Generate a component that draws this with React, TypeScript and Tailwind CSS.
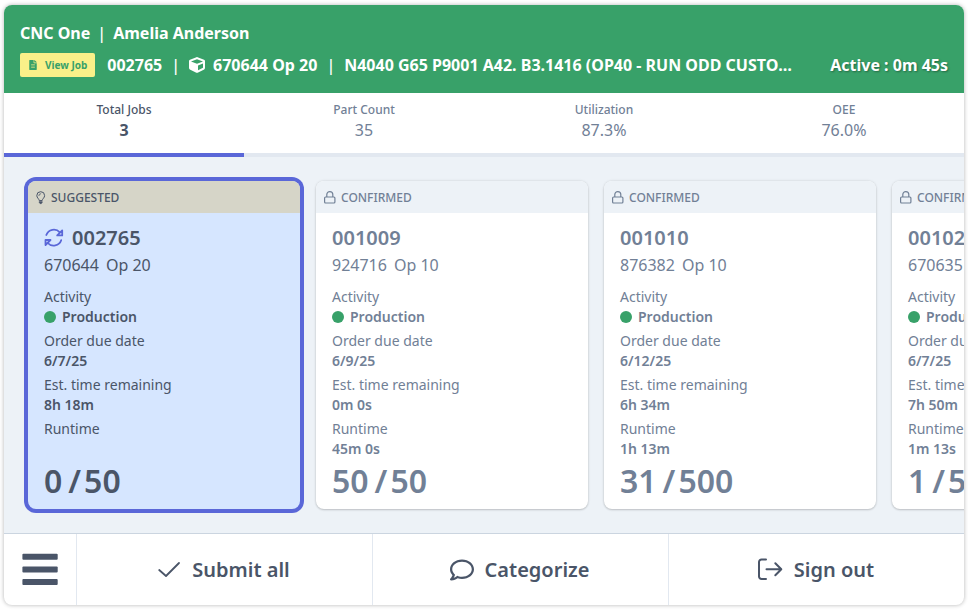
import React from "react";
import { FaCube, FaFileAlt, FaRegComment } from "react-icons/fa";

type Job = {
  id: string;
  part: string;
  op: string;
  due: string;
  remaining: string;
  runtime: string;
  done: number;
  total: number;
  suggested?: boolean;
};

const stats = [
  { label: "Total Jobs", value: "3" },
  { label: "Part Count", value: "35" },
  { label: "Utilization", value: "87.3%" },
  { label: "OEE", value: "76.0%" },
];

const jobs: Job[] = [
  { id: "002765", part: "670644", op: "Op 20", due: "6/7/25", remaining: "8h 18m", runtime: "", done: 0, total: 50, suggested: true },
  { id: "001009", part: "924716", op: "Op 10", due: "6/9/25", remaining: "0m 0s", runtime: "45m 0s", done: 50, total: 50 },
  { id: "001010", part: "876382", op: "Op 10", due: "6/12/25", remaining: "6h 34m", runtime: "1h 13m", done: 31, total: 500 },
  { id: "001020", part: "670635", op: "Op 10", due: "6/7/25", remaining: "7h 50m", runtime: "1m 13s", done: 1, total: 50 },
];

function BulbIcon() {
  return (
    <svg viewBox="0 0 10 14" className="h-[14px] w-[10px]" fill="none" stroke="currentColor" strokeLinecap="round" strokeLinejoin="round" aria-hidden="true">
      <path d="M3.2 9.2C3.1 7.800 0.800 6.800 0.800 4.600a3.900 3.900 0 0 1 7.800 0C8.600 6.800 6.400 7.800 6.200 9.200z" />
      <path d="M3.300 10.800h2.800M3.500 11.800l.6.8h1.200l.6-.8z" />
      <path d="M2.800 4.600a1.900 1.900 0 0 1 1.900-1.900" strokeWidth="0.800" />
    </svg>
  );
}

function LockIcon() {
  return (
    <svg viewBox="0 0 12 14" className="h-[14px] w-3" fill="none" stroke="currentColor" strokeWidth="1.200" aria-hidden="true">
      <rect x="0.600" y="6" width="10.300" height="6" rx="1" />
      <path d="M2.800 6V3.600a3 3 0 0 1 6 0V6" />
    </svg>
  );
}

function SyncIcon() {
  return (
    <svg viewBox="0 0 20 20" className="h-5 w-5 text-[#5a67d8]" fill="none" stroke="currentColor" strokeWidth="1.800" strokeLinecap="round" strokeLinejoin="round" aria-hidden="true">
      <path d="M2.300 7A8 8 0 0 1 15.800 4.300" />
      <path d="M18.200 2.400v5h-5z" />
      <path d="M17.200 12.200A8 8 0 0 1 3.700 15" />
      <path d="M1.500 17v-5h5z" />
    </svg>
  );
}

function CheckIcon() {
  return (
    <svg viewBox="0 0 24 24" className="h-6 w-6" fill="none" stroke="currentColor" strokeWidth="1.800" strokeLinecap="round" strokeLinejoin="round" aria-hidden="true">
      <path d="M2.200 12 9 18 22 5" />
    </svg>
  );
}

function SignOutIcon() {
  return (
    <svg viewBox="0 0 26 24" className="h-6 w-[26px]" fill="none" stroke="currentColor" strokeWidth="2" strokeLinecap="round" strokeLinejoin="round" aria-hidden="true">
      <path d="M9 1.500H4.500A2.500 2.500 0 0 0 2 4v14.500A2.500 2.500 0 0 0 4.500 21H9" />
      <path d="M9.500 11.200h14.500M18.300 5.200l6 6-6 6" />
    </svg>
  );
}

function MenuIcon() {
  return (
    <svg viewBox="0 0 36 34" className="h-[34px] w-9" fill="currentColor" aria-hidden="true">
      <rect x="0.400" y="0.800" width="35.300" height="6" rx="1" />
      <rect x="0.400" y="13.400" width="35.300" height="6" rx="1" />
      <rect x="0.400" y="25.900" width="35.300" height="6" rx="1" />
    </svg>
  );
}

function Field({ label, children }: { label: string; children?: React.ReactNode }) {
  return (
    <div className="mb-1 text-sm leading-5">
      <dt>{label}</dt>
      <dd className="flex h-5 items-center font-semibold">{children}</dd>
    </div>
  );
}

function JobCard({ job }: { job: Job }) {
  const look = job.suggested
    ? "bg-[#d6e6ff] text-[#4a5568] ring-4 ring-[#5a67d8]"
    : "bg-white text-[#718096] shadow-[0_0_3px_rgba(0,0,0,0.12),0_1px_2px_rgba(0,0,0,0.16)]";
  return (
    <article className={"w-[272px] shrink-0 rounded-lg " + look}>
      <div className={"flex h-8 items-center gap-[5px] rounded-t-lg pt-0.5 pl-2 text-xs font-medium uppercase " + (job.suggested ? "bg-[#d6d5c8]" : "bg-[#edf2f7]")}>
        {job.suggested ? <BulbIcon /> : <LockIcon />}
        <span>{job.suggested ? "Suggested" : "Confirmed"}</span>
      </div>
      <div className="px-4 py-[10px]">
        <h2 className="flex items-center gap-2 text-xl leading-[30px] font-semibold">
          {job.suggested && <SyncIcon />}
          {job.id}
        </h2>
        <p className="flex gap-[7px] text-base leading-6">
          <span>{job.part}</span>
          <span>{job.op}</span>
        </p>
        <dl className="mt-[10px]">
          <Field label="Activity">
            <span className="mr-[6px] size-3 rounded-full bg-[#38a169]" />
            Production
          </Field>
          <Field label="Order due date">{job.due}</Field>
          <Field label="Est. time remaining">{job.remaining}</Field>
          <Field label="Runtime">{job.runtime}</Field>
        </dl>
        <p className="flex text-[32px] leading-9 font-semibold">
          <span>{job.done}</span>
          <span className="mr-[3px] ml-[6px]">/</span>
          <span>{job.total}</span>
        </p>
      </div>
    </article>
  );
}

export default function App() {
  return (
    <div className="flex min-h-screen bg-white px-1 py-[5px] font-['Noto_Sans',sans-serif] text-[#4a5568]">
      <main className="flex min-w-0 flex-1 flex-col overflow-hidden rounded-lg bg-white shadow-[0_0_4px_rgba(0,0,0,0.3)]">
        <header className="bg-[#38a169] px-4 py-4 text-base leading-6 font-bold text-white">
          <h1 className="flex gap-[7px]">
            <span>CNC One</span>
            <span className="font-medium">|</span>
            <span>Amelia Anderson</span>
          </h1>
          <div className="mt-2 flex items-center">
            <button type="button" className="mr-3 flex h-6 shrink-0 items-center gap-[7px] rounded-xs bg-[#faf089] px-2 text-[10px] text-[#38a169]">
              <FaFileAlt className="size-[10px]" />
              View Job
            </button>
            <div className="flex min-w-0 flex-1 items-center gap-[9px]">
              <span>002765</span>
              <span className="font-medium">|</span>
              <span className="flex shrink-0 items-center gap-2">
                <FaCube className="size-4" />
                670644 Op 20
              </span>
              <span className="font-medium">|</span>
              <span className="truncate">N4040 G65 P9001 A42. B3.1416 (OP40 - RUN ODD CUSTOM CYCLE)</span>
            </div>
            <span className="ml-[30px] shrink-0 [text-shadow:1px_1px_2px_rgba(0,0,0,0.35)]">Active : 0m 45s</span>
          </div>
        </header>

        <nav className="grid grid-cols-4">
          {stats.map((s, i) => (
            <button
              type="button"
              key={s.label}
              className={
                "flex h-16 flex-col items-center border-b-4 pt-[9px] font-medium " +
                (i === 0 ? "border-[#5a67d8]" : "border-[#e2e8f0] text-[#718096]")
              }
            >
              <span className="text-xs leading-4">{s.label}</span>
              <span className={i === 0 ? "text-base leading-6 font-bold" : "text-base leading-6 font-normal"}>{s.value}</span>
            </button>
          ))}
        </nav>

        <section className="flex flex-1 items-start gap-4 overflow-hidden bg-[#edf2f7] p-6">
          {jobs.map((job) => (
            <JobCard key={job.id} job={job} />
          ))}
        </section>

        <footer className="flex h-[72px] border-t border-[#cbd5e0] text-xl font-semibold">
          <button type="button" aria-label="Menu" className="flex w-[72px] shrink-0 items-center justify-center">
            <MenuIcon />
          </button>
          <button type="button" className="flex flex-1 items-center justify-center gap-[11px] border-l border-[#e2e8f0] pr-0.5">
            <CheckIcon />
            Submit all
          </button>
          <button type="button" className="flex flex-1 items-center justify-center gap-[11px] border-l border-[#e2e8f0] pr-0.5">
            <FaRegComment className="size-6" />
            Categorize
          </button>
          <button type="button" className="flex flex-1 items-center justify-center gap-[11px] border-l border-[#e2e8f0] pr-0.5">
            <SignOutIcon />
            Sign out
          </button>
        </footer>
      </main>
    </div>
  );
}
